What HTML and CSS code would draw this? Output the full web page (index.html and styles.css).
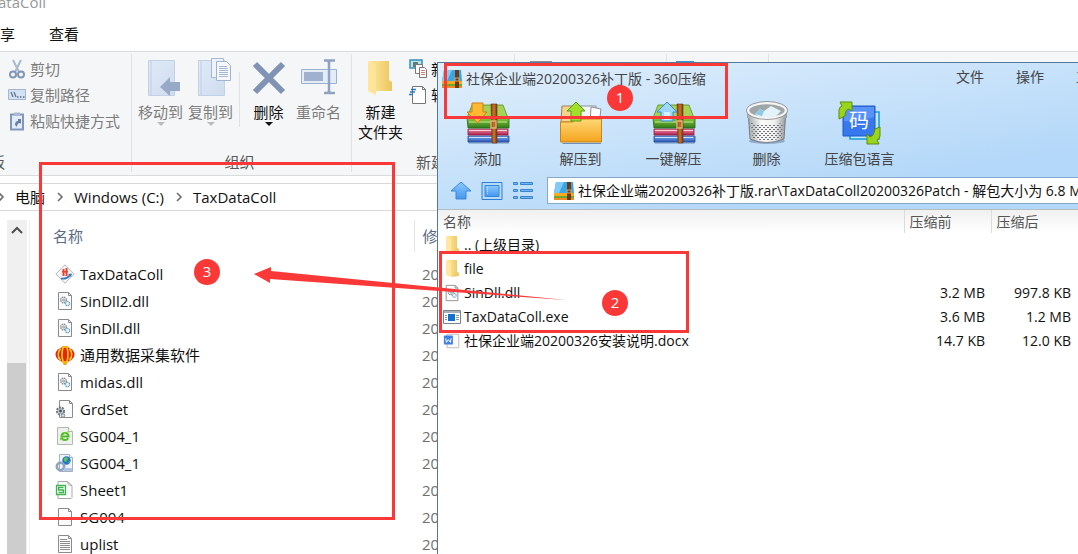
FILE: index.html
```
<!DOCTYPE html>
<html lang="zh-CN">
<head>
  <meta charset="UTF-8">
  <meta name="viewport" content="width=device-width, initial-scale=1.0">
  <title>TaxDataColl</title>
  <link rel="stylesheet" href="styles.css">
</head>
<body>
  <!-- shared icons -->
  <svg class="sprite" aria-hidden="true">
    <defs>
      <linearGradient id="folderFill" x1="0" x2="1" y1="0" y2="0">
        <stop offset="0" stop-color="#ffe9a2"/><stop offset="1" stop-color="#ecc65c"/>
      </linearGradient>
      <linearGradient id="paleBlue" x1="0" x2="1" y1="0" y2="1">
        <stop offset="0" stop-color="#e0eaf8"/><stop offset="1" stop-color="#cfdcef"/>
      </linearGradient>
      <linearGradient id="greenBook" x1="0" x2="0" y1="0" y2="1">
        <stop offset="0" stop-color="#8cc83c"/><stop offset="1" stop-color="#2f7a1c"/>
      </linearGradient>
      <linearGradient id="redBook" x1="0" x2="0" y1="0" y2="1">
        <stop offset="0" stop-color="#f08aa4"/><stop offset="1" stop-color="#b02050"/>
      </linearGradient>
      <linearGradient id="blueBook" x1="0" x2="0" y1="0" y2="1">
        <stop offset="0" stop-color="#7aaaf0"/><stop offset="1" stop-color="#2a58b8"/>
      </linearGradient>
      <linearGradient id="belt" x1="0" x2="1" y1="0" y2="0">
        <stop offset="0" stop-color="#8a4310"/><stop offset=".5" stop-color="#c9772e"/><stop offset="1" stop-color="#78380c"/>
      </linearGradient>
      <linearGradient id="orangeFolder" x1="0" x2="0" y1="0" y2="1">
        <stop offset="0" stop-color="#ffd877"/><stop offset="1" stop-color="#f5a31c"/>
      </linearGradient>
      <linearGradient id="skyBlue" x1="0" x2="0" y1="0" y2="1">
        <stop offset="0" stop-color="#8ccaff"/><stop offset="1" stop-color="#4496ee"/>
      </linearGradient>
      <linearGradient id="metal" x1="0" x2="1" y1="0" y2="0">
        <stop offset="0" stop-color="#a4a6a8"/><stop offset=".35" stop-color="#fafafa"/><stop offset=".7" stop-color="#f0f0f0"/><stop offset="1" stop-color="#96989b"/>
      </linearGradient>
      <pattern id="mesh" width="4" height="4" patternUnits="userSpaceOnUse">
        <rect y="0" width="2" height="1" fill="#6e7073"/><rect x="2" y="2" width="2" height="1" fill="#6e7073"/>
      </pattern>
    </defs>
    <symbol id="i-chevron" viewBox="0 0 8 10"><path d="M2 1l4 4-4 4" fill="none" stroke="#6d6d6d" stroke-width="1.6"/></symbol>
    <symbol id="i-folder" viewBox="0 0 18 20">
      <path d="M4 1h10v12l2 1v3H5z" fill="url(#folderFill)"/>
      <path d="M3 1l5 3v14l-5-2z" fill="#ffe9a0"/>
      <path d="M14 13l2 1v3l-8 1" fill="#f0cd6a"/>
    </symbol>
    <symbol id="i-page" viewBox="0 0 20 20">
      <path d="M3.500 1.500h10l3 3v14h-13z" fill="#fbfbfb" stroke="#8b8b8b"/>
      <path d="M13.500 1.500v3h3" fill="none" stroke="#8b8b8b"/>
    </symbol>
    <symbol id="i-dll" viewBox="0 0 20 20">
      <use href="#i-page"/>
      <circle cx="8.500" cy="9" r="2.800" fill="#f3f3f3" stroke="#7f878d" stroke-width="1.300" stroke-dasharray="1.500 .7"/>
      <circle cx="8.500" cy="9" r="1" fill="none" stroke="#7f878d" stroke-width=".8"/>
      <circle cx="12.500" cy="12.500" r="2.200" fill="#e4f2fa" stroke="#6fa3c4" stroke-width="1.200" stroke-dasharray="1.300 .5"/>
    </symbol>
    <symbol id="i-text" viewBox="0 0 20 20">
      <use href="#i-page"/>
      <path d="M5 5.500h7M5 7.500h10M5 9.500h10M5 11.500h10M5 13.500h10M5 15.500h10" stroke="#8d8d8d"/>
    </symbol>
    <symbol id="i-tax" viewBox="0 0 20 20">
      <path d="M10 .8L19.200 10 10 19.200.8 10z" fill="#f4f5f6" stroke="#b3b6ba"/>
      <path d="M7.500 5h2v7h-2zM10.500 4h2v8h-2zM7 7h6v1.500H7z" fill="#e8432e"/>
      <path d="M6 13.500q5 1 8-2.500l-1-1 4-.5-1 3.500-.8-.8q-3 4-9.200 3.300z" fill="#3e78bf"/>
    </symbol>
    <symbol id="i-lantern" viewBox="0 0 20 20">
      <ellipse cx="10" cy="9.500" rx="9.500" ry="7.500" fill="#e62414"/>
      <path d="M5.500 3.500q-4.500 6 0 12M14.500 3.500q4.500 6 0 12M8 2.500q-2 7 0 14M12 2.500q2 7 0 14" fill="none" stroke="#ffd21f" stroke-width="1.600"/>
      <path d="M7 1h6v2H7zM6 16h8l-2 2.500H8z" fill="#f7b410"/><path d="M10 18v2" stroke="#e8a80c" stroke-width="3"/>
    </symbol>
    <symbol id="i-gearpage" viewBox="0 0 20 20">
      <use href="#i-page" x="1"/>
      <circle cx="5.500" cy="12" r="3.600" fill="#c4cbd1" stroke="#6f7a83" stroke-width="2" stroke-dasharray="2 1"/>
      <circle cx="5.500" cy="12" r="1.400" fill="#4a535b"/>
      <circle cx="8" cy="16.500" r="1.800" fill="#d6dce0" stroke="#848e96"/>
    </symbol>
    <symbol id="i-epage" viewBox="0 0 20 20">
      <path d="M2.500 1.500h11l4 4v13h-15z" fill="#eef0ed" stroke="#b4b8b2"/><path d="M13.500 1.500v4h4" fill="#fff" stroke="#b4b8b2"/>
      <path d="M7 10.500h6.500q0-3.500-3.500-3.500t-3.500 3.500 3.500 3.500q2.300 0 3.200-1.700" fill="none" stroke="#51bd26" stroke-width="2"/>
      <path d="M5 14Q8 6 15 5.500" fill="none" stroke="#7ed043"/>
    </symbol>
    <symbol id="i-webpage" viewBox="0 0 20 20">
      <path d="M4.500 1.500h10l3 3v14h-13z" fill="#f0f3fa" stroke="#a7afc4"/><path d="M14.500 1.500v3h3" fill="#fff" stroke="#a7afc4"/>
      <circle cx="11.500" cy="7.500" r="4.200" fill="#2375cc"/><path d="M9 5l3-1 1 2-2 3-2-1zM13 9l2-1-1 3z" fill="#5ec34f"/>
      <circle cx="5.500" cy="13.500" r="3.700" fill="none" stroke="#8fa5bd" stroke-width="2.600"/>
      <path d="M9 15h8v3H9z" fill="#b1c5e2"/>
    </symbol>
    <symbol id="i-sheet" viewBox="0 0 20 20">
      <path d="M3 1.500h9.500l4.500 4v12l-1 1H3z" fill="#fff" stroke="#a9a9a9"/><path d="M12.500 1.500q0 4 4.500 4" fill="none" stroke="#a9a9a9"/>
      <path d="M1.500 5.500h9v9h-9z" fill="#fff" stroke="#3fb34f" stroke-width="1.300"/>
      <path d="M8.500 7.500h-5V10h5v2.500h-5" fill="none" stroke="#3fb34f" stroke-width="1.400"/>
    </symbol>
    <symbol id="i-exe" viewBox="0 0 18 14">
      <path d="M.5.5h17v13H.5z" fill="#fff" stroke="#7b838a"/><path d="M1 1h16v2H1z" fill="#a9b1b8"/>
      <path d="M5 4h7v7H5z" fill="#0f70cd"/><path d="M2 5.500h2M2 7.500h2M2 9.500h2M13 5.500h3M13 7.500h3M13 9.500h3" stroke="#8c959c"/>
    </symbol>
    <symbol id="i-doc" viewBox="0 0 20 20">
      <path d="M4.500 2.500h13v15h-13z" fill="#fafafa" stroke="#b5b5b5"/>
      <rect x="1" y="4" width="10" height="10" rx="1" fill="#3f7fe4"/>
      <path d="M3 7l.8 4.500L6 8.500l2.200 3L9 7" fill="none" stroke="#fff" stroke-width="1.100"/>
    </symbol>
    <symbol id="i-zip" viewBox="0 0 20 20">
      <path d="M2 1h17l1 11H0z" fill="#3ba6e6"/><path d="M2 1h8L5 12H0z" fill="#7fcbf5"/>
      <path d="M0 12h20v3H0z" fill="#f7ac20"/><path d="M0 15h20v2H0z" fill="#6aa832"/><path d="M0 17h20v2H0z" fill="#ee8c22"/>
      <path d="M13 1h4v18h-4z" fill="#713915"/><path d="M13 9h4v3h-4z" fill="none" stroke="#dca668"/>
    </symbol>
    <symbol id="i-books" viewBox="0 0 44 44">
      <path d="M2 41h41v2H3z" fill="#6e90ba" opacity=".5"/>
      <path d="M2 35h41v6H2z" fill="url(#blueBook)" stroke="#234a94" stroke-width=".8"/>
      <path d="M3 36.500h38" stroke="#cfe0fa"/>
      <path d="M2 28h40v6H2z" fill="url(#redBook)" stroke="#8a1c3c" stroke-width=".8"/>
      <path d="M3 29.500h38" stroke="#fbd0da"/>
      <path d="M6 4h31l5 13H1z" fill="#a6d255" stroke="#568f22" stroke-width=".8"/>
      <path d="M1 17h42v10H2z" fill="url(#greenBook)" stroke="#2a6a18" stroke-width=".8"/>
      <path d="M3 21h38" stroke="#c8ea92"/>
      <path d="M25 3h6v39h-5z" fill="url(#belt)" stroke="#69300b" stroke-width=".6"/>
      <path d="M25 20h5v7h-5z" fill="none" stroke="#e4b378" stroke-width="1.400"/>
    </symbol>
  </svg>

  <main class="desktop">
    <section class="explorer">
      <header class="explorer-title">ataColl</header>
      <nav class="tabs">
        <button>享</button>
        <button>查看</button>
      </nav>

      <div class="ribbon">
        <div class="group group-clip">
          <div class="small-tools">
            <button class="small off">
              <svg width="18" height="20" viewBox="0 0 18 20"><path d="M5 1l6 12M13 1L7 13" stroke="#a9b9cf" stroke-width="2"/><circle cx="5" cy="15.500" r="3" fill="none" stroke="#8397b5" stroke-width="2"/><circle cx="13" cy="15.500" r="3" fill="none" stroke="#8397b5" stroke-width="2"/></svg>剪切
            </button>
            <button class="small off">
              <svg width="18" height="20" viewBox="0 0 18 20"><path d="M.5 4.500h17v10H.5z" fill="#d4e1f3" stroke="#a3b5d1"/><path d="M3 7l2 5M6 7l2 5" stroke="#5c6f8d" stroke-width="1.200"/><path d="M9 12h1.500M12 12h1.500M15 12h1.500" stroke="#5c6f8d" stroke-width="1.500"/></svg>复制路径
            </button>
            <button class="small off">
              <svg width="18" height="20" viewBox="0 0 18 20"><path d="M3 3.500h12v15H3z" fill="#e3ecf8" stroke="#8298bb" stroke-width="2"/><path d="M6 1.500h6v3H6z" fill="#a9b9d2"/><path d="M7 14q0-4 3-4V8h3v5l-1-1q-3 0-3 4z" fill="#6680aa"/></svg>粘贴快捷方式
            </button>
          </div>
          <p class="group-name">板</p>
        </div>

        <div class="group group-organize">
          <div class="big-tools">
            <button class="big off">
              <svg width="36" height="42" viewBox="0 0 36 42"><path d="M5.500 4.500h26v35h-26z" fill="url(#paleBlue)" stroke="#c3d1e7"/><path d="M8 5v34" stroke="#bfcde4"/><path d="M17 31l10-10v5h10v9H27v5z" fill="#98a9c7"/></svg>
              移动到<i class="arrow"></i>
            </button>
            <button class="big off">
              <svg width="36" height="42" viewBox="0 0 36 42"><path d="M5.500 4.500h26v35h-26z" fill="url(#paleBlue)" stroke="#c3d1e7"/><path d="M8 5v34" stroke="#bfcde4"/><path d="M18.500 2.500h12v19h-12z" fill="#eef3fb" stroke="#a6b8d6"/><path d="M23.500 5.500h10l4 4v15h-14z" fill="#f4f7fc" stroke="#a0b2d0"/><path d="M26 10.500h8M26 12.500h9M26 14.500h9M26 16.500h9M26 18.500h9M26 20.500h9" stroke="#a6b8d6"/></svg>
              复制到<i class="arrow"></i>
            </button>
            <span class="split"></span>
            <button class="big">
              <svg width="36" height="42" viewBox="0 0 36 42"><path d="M4 8l28 28M32 8L4 36" stroke="#8093b4" stroke-width="6"/></svg>
              删除<i class="arrow"></i>
            </button>
            <button class="big off">
              <svg width="36" height="42" viewBox="0 0 36 42"><path d="M.5 13.500h35v14H.5z" fill="#e4ecf8" stroke="#9db0cd"/><path d="M3 16h19v9H3z" fill="#9fb1ce"/><path d="M28 6v30M23 4.500h4l1 2 1-2h5M23 37h4l1-2 1 2h5" fill="none" stroke="#8ea2c2" stroke-width="2.500"/></svg>
              重命名
            </button>
          </div>
          <p class="group-name">组织</p>
        </div>

        <div class="group group-new">
          <div class="big-tools">
            <button class="big">
              <svg width="36" height="42" viewBox="0 0 36 42"><path d="M6 5h20v19l3 2v9H8z" fill="url(#folderFill)"/><path d="M5 5l8 5v29l-8-4z" fill="#ffe49a"/></svg>
              新建<br>文件夹
            </button>
            <div class="small-tools">
              <button class="small">
                <svg width="20" height="20" viewBox="0 0 20 20"><path d="M2 1h12v8H2z" fill="#b9e3ee" stroke="#3a8fb4" stroke-width="1.500"/><path d="M5 3h5v5H5z" fill="#5c7f71"/><path d="M7.500 5.500h7v9h-7z" fill="#fff" stroke="#777"/><path d="M11.500 8.500h5l2 2v8h-7z" fill="#fff" stroke="#777"/><path d="M13 11.500h4M13 13.500h4M13 15.500h4" stroke="#d87f74"/></svg>新
              </button>
              <button class="small">
                <svg width="20" height="20" viewBox="0 0 20 20"><path d="M4.500 1.500h10l3 3v14h-13z" fill="#fff" stroke="#777"/><path d="M14.500 1.500v3h3" fill="none" stroke="#777"/><path d="M3 4.500h5M2 7h5M1 9.500h4" stroke="#2678c0" stroke-width="1.500"/></svg>轻
              </button>
            </div>
          </div>
          <p class="group-name">新建</p>
        </div>
        <div class="group group-open"><span class="peek"></span></div>
        <div class="group group-select"><span class="peek"></span></div>
      </div>

      <nav class="address">
        <svg width="8" height="10"><use href="#i-chevron"/></svg>
        <a href="#">电脑</a>
        <svg width="8" height="10"><use href="#i-chevron"/></svg>
        <a href="#">Windows (C:)</a>
        <svg width="8" height="10"><use href="#i-chevron"/></svg>
        <a href="#">TaxDataColl</a>
      </nav>

      <div class="explorer-body">
        <div class="scrollbar">
          <svg width="20" height="20" viewBox="0 0 20 20"><path d="M5 13l5-5 5 5" fill="none" stroke="#505050" stroke-width="2"/></svg>
          <div class="thumb"></div>
        </div>
        <table class="files">
          <thead>
            <tr><th>名称</th><th class="date">修</th></tr>
          </thead>
          <tbody>
            <tr><td><svg><use href="#i-tax"/></svg>TaxDataColl</td><td class="date">20</td></tr>
            <tr><td><svg><use href="#i-dll"/></svg>SinDll2.dll</td><td class="date">20</td></tr>
            <tr><td><svg><use href="#i-dll"/></svg>SinDll.dll</td><td class="date">20</td></tr>
            <tr><td><svg><use href="#i-lantern"/></svg>通用数据采集软件</td><td class="date">20</td></tr>
            <tr><td><svg><use href="#i-dll"/></svg>midas.dll</td><td class="date">20</td></tr>
            <tr><td><svg><use href="#i-gearpage"/></svg>GrdSet</td><td class="date">20</td></tr>
            <tr><td><svg><use href="#i-epage"/></svg>SG004_1</td><td class="date">20</td></tr>
            <tr><td><svg><use href="#i-webpage"/></svg>SG004_1</td><td class="date">20</td></tr>
            <tr><td><svg><use href="#i-sheet"/></svg>Sheet1</td><td class="date">20</td></tr>
            <tr><td><svg><use href="#i-page"/></svg>SG004</td><td class="date">20</td></tr>
            <tr><td><svg><use href="#i-text"/></svg>uplist</td><td class="date">20</td></tr>
          </tbody>
        </table>
      </div>
    </section>

    <section class="archive">
      <div class="archive-head">
        <header class="archive-title">
          <svg width="20" height="20"><use href="#i-zip"/></svg>
          <h1>社保企业端20200326补丁版 - 360压缩</h1>
          <nav class="menu">
            <button>文件</button>
            <button>操作</button>
            <button>工</button>
          </nav>
        </header>

        <div class="toolbar">
          <button>
            <svg viewBox="0 0 44 44"><use href="#i-books"/><path d="M6 2h11v9h4l-9.500 11L1 11h5z" fill="#fdb934" stroke="#d87a12"/></svg>
            添加
          </button>
          <button>
            <svg viewBox="0 0 44 44"><path d="M3 5h14l3 4v12H2z" fill="#f3d58e" stroke="#9b8355"/><path d="M20 5h17v18H20z" fill="#f5f6f7" stroke="#8c8f94"/><path d="M32 6l10 2-2 15h-9z" fill="#fff" stroke="#8c8f94"/><path d="M1.500 21h12l4-3h25v23h-41z" fill="url(#orangeFolder)" stroke="#c98512"/><path d="M3 42h39v1H4z" fill="#6e90ba"/><path d="M17 1l9 9h-4v10H12V10H8z" fill="#a2df2b" stroke="#569a12"/></svg>
            解压到
          </button>
          <button>
            <svg viewBox="0 0 44 44"><use href="#i-books"/><path d="M15 1l10 10h-4v9H9v-9H5z" fill="#9dd7fb" stroke="#348bd4"/><path d="M12 11h6v8h-6z" fill="#d5f0ff"/></svg>
            一键解压
          </button>
          <button>
            <svg viewBox="0 0 44 44"><ellipse cx="22" cy="40" rx="18" ry="3" fill="#7088a6" opacity=".6"/><path d="M3 9l2 29q16 7 34 0l2-29z" fill="url(#metal)" stroke="#66696c" stroke-width=".8"/><path d="M6 22q16 4 32 0l-1 15q-15 5-30 0z" fill="url(#mesh)"/><path d="M2 9v8q19 8 40 0V9z" fill="url(#metal)"/><ellipse cx="22" cy="9.500" rx="19" ry="7.500" fill="#a0a5a8" stroke="#f5f5f5" stroke-width="2.500"/><ellipse cx="22" cy="9.500" rx="20.500" ry="9" fill="none" stroke="#808285" stroke-width=".8"/><path d="M10 13l5-5 4 2 7-5 10 5-5 5q-9 3-18 0z" fill="#e4f2f9"/><path d="M10 13l5-5 4 2-2 5z" fill="#8cc9e4"/></svg>
            删除
          </button>
          <button>
            <svg viewBox="0 0 44 44"><path d="M12 11h29v27H12z" fill="#bfeafb" stroke="#159bdc" stroke-width="1.500"/><path d="M5 5h32v30H5z" fill="#3878ee" stroke="#1c58c0"/><path d="M6 6h30v10q-15 5-30 4z" fill="#5a93f7"/><text x="21" y="27" text-anchor="middle" class="glyph">码</text><path d="M1 18V9q1-4 3-4L2 1h12v9l-3-2q-4 1-4 7z" fill="#9bd41d" stroke="#5a8d0c"/><path d="M42 26v9q-1 4-3 4l2 4H29V33l3 3q4-1 5-8z" fill="#9bd41d" stroke="#5a8d0c"/></svg>
            压缩包语言
          </button>
        </div>

        <div class="pathbar">
          <button aria-label="向上"><svg width="22" height="20" viewBox="0 0 22 20"><path d="M11 1l10 9h-5v8H6v-8H1z" fill="url(#skyBlue)" stroke="#3a86dc"/></svg></button>
          <button aria-label="预览"><svg width="22" height="20" viewBox="0 0 22 20"><path d="M1 1.500h20v17H1z" fill="#b4dafc" stroke="#2f7cd2"/><path d="M4 4.500h14v11H4z" fill="url(#skyBlue)" stroke="#3a86dc"/><path d="M6.500 6v8" stroke="#d7edff" stroke-dasharray="1 1"/></svg></button>
          <button aria-label="列表"><svg width="22" height="20" viewBox="0 0 22 20"><path d="M1.500 1.500h4v2h-4zM8.500 1.500h12v2h-12zM1.500 8.500h4v2h-4zM8.500 8.500h12v2h-12zM1.500 15.500h4v2h-4zM8.500 15.500h12v2h-12z" fill="#6fb4f4" stroke="#3a83cf"/></svg></button>
          <label class="path">
            <svg width="20" height="20"><use href="#i-zip"/></svg>
            <input type="text" aria-label="路径" value="社保企业端20200326补丁版.rar\TaxDataColl20200326Patch - 解包大小为 6.8 M">
          </label>
        </div>
      </div>

      <table class="entries">
        <thead>
          <tr><th>名称</th><th class="before">压缩前</th><th class="after">压缩后</th></tr>
        </thead>
        <tbody>
          <tr><td><svg><use href="#i-folder"/></svg>.. (上级目录)</td><td class="before"></td><td class="after"></td></tr>
          <tr><td><svg><use href="#i-folder"/></svg>file</td><td class="before"></td><td class="after"></td></tr>
          <tr><td><svg><use href="#i-dll"/></svg>SinDll.dll</td><td class="before">3.2 MB</td><td class="after">997.8 KB</td></tr>
          <tr><td><svg><use href="#i-exe"/></svg>TaxDataColl.exe</td><td class="before">3.6 MB</td><td class="after">1.2 MB</td></tr>
          <tr><td><svg><use href="#i-doc"/></svg>社保企业端20200326安装说明.docx</td><td class="before">14.7 KB</td><td class="after">12.0 KB</td></tr>
        </tbody>
      </table>
    </section>

    <!-- step markers drawn over both windows -->
    <div class="mark mark-title"></div>
    <div class="mark mark-entries"></div>
    <div class="mark mark-target"></div>
    <svg class="drag-arrow" width="314" height="36" viewBox="0 0 314 36"><path d="M0 9L17 2v4l295 29L16 14l0 4z" fill="#fb3838"/></svg>
    <span class="step step-1">1</span>
    <span class="step step-2">2</span>
    <span class="step step-3">3</span>
  </main>
</body>
</html>
```
FILE: styles.css
```
* {
  box-sizing: border-box;
}

body {
  margin: 0;
  font-family: "Open Sans", "Noto Sans CJK SC", sans-serif;
  font-size: 15px;
  line-height: 20px;
  color: #111;
  background: #fff;
}

button {
  padding: 0;
  border: none;
  background: none;
  font: inherit;
  color: inherit;
  white-space: nowrap;
}

a {
  color: inherit;
  text-decoration: none;
}

p {
  margin: 0;
}

svg {
  flex: none;
}

table {
  border-collapse: collapse;
  table-layout: fixed;
}

th {
  font-weight: 400;
  text-align: left;
}

td,
th {
  padding: 0;
  white-space: nowrap;
}

.sprite {
  position: absolute;
  width: 0;
  height: 0;
}

.desktop {
  position: relative;
  height: 100vh;
  overflow: hidden;
}

/* explorer window */
.explorer {
  display: flex;
  flex-direction: column;
  height: 100%;
}

.explorer-title {
  flex: none;
  margin: -8px 0 0 -2px;
  color: #999;
}

.tabs {
  display: flex;
  flex: none;
  gap: 34px;
  height: 39px;
  padding-top: 4px;
}

.ribbon {
  display: flex;
  flex: none;
  height: 125px;
  padding: 2px 0 3px;
  background: #f5f6f7;
  border-top: 1px solid #dadbdc;
  border-bottom: 1px solid #dadbdc;
}

.group {
  display: flex;
  flex-direction: column;
  flex: none;
  justify-content: space-between;
  border-right: 1px solid #dfe1e4;
}

.group-clip {
  width: 132px;
  padding-left: 8px;
}

.group-organize {
  width: 220px;
}

.group-new {
  width: 163px;
}

.group-open {
  width: 152px;
}

.group-select {
  width: 102px;
}

.group-name {
  padding-right: 4px;
  color: #5a5a5a;
  text-align: center;
}

.group-clip .group-name {
  margin-left: -18px;
  text-align: left;
}

.small-tools {
  display: flex;
  flex-direction: column;
  gap: 6px;
  padding-top: 5px;
}

.small {
  display: flex;
  align-items: center;
  gap: 4px;
}

.off {
  color: #7d7d7d;
}

.big-tools {
  display: flex;
  gap: 5px;
  padding: 2px 0 0 6px;
}

.big {
  display: flex;
  flex-direction: column;
  align-items: center;
  min-width: 45px;
}

.big svg {
  margin-bottom: 4px;
  overflow: visible;
}

.arrow {
  border: 4px solid transparent;
  border-top-color: currentColor;
  border-bottom: none;
}

.off .arrow {
  border-top-color: #bbb;
}

.split {
  width: 1px;
  height: 55px;
  margin: 16px 1px 0;
  background: #dfe1e4;
}

.group-new .small-tools {
  padding-top: 3px;
}

.group-new .small {
  gap: 3px;
}

.peek {
  width: 22px;
  margin: 7px 0 0 15px;
  border-top: 2px solid #8b9298;
}

.group-select .peek {
  width: 18px;
  margin-left: 9px;
  border-color: #3b93d4;
}

.address {
  display: flex;
  flex: none;
  align-items: center;
  gap: 10px;
  height: 28px;
  margin: 7px 0 0 -4px;
  border: 1px solid #d9d9d9;
}

.address a {
  margin-right: 1px;
}

.explorer-body {
  display: flex;
  flex: 1;
  align-items: stretch;
  min-height: 0;
  padding: 9px 0 0 7px;
}

.scrollbar {
  display: flex;
  flex: none;
  flex-direction: column;
  width: 20px;
  background: #f0f0f0;
}

.thumb {
  flex: 1;
  width: 19px;
  margin-top: 123px;
  background: #cdcdcd;
}

.files {
  flex: none;
  align-self: flex-start;
  width: 439px;
  margin-left: 2px;
  border-left: 1px solid #f0f0f0;
}

.files th {
  height: 32px;
  padding-left: 23px;
  color: #5b6b84;
}

.files .date {
  width: 54px;
  padding-left: 8px;
  color: #707070;
}

.files th.date {
  border-left: 1px solid #e2e2e2;
  color: #5b6b84;
}

.files tbody::before {
  display: block;
  height: 8px;
  content: "";
}

.files td {
  height: 27px;
  padding-left: 25px;
}

.files svg {
  width: 20px;
  height: 20px;
  margin-right: 5px;
  vertical-align: top;
}

/* archive window, runs off the right edge of the screen */
.archive {
  position: absolute;
  top: 62px;
  right: -26px;
  bottom: 0;
  left: 437px;
  font-size: 14px;
  background: #fff;
  border-top: 1px solid #55779b;
  border-left: 1px solid #55779b;
}

.archive-head {
  height: 147px;
  background: linear-gradient(170deg, #e1effc, #b4d8f9 75%);
  border-bottom: 1px solid #b4bcc4;
}

.archive-title {
  display: flex;
  gap: 4px;
  height: 38px;
  padding: 6px 0 0 4px;
  color: #444;
}

.archive-title h1 {
  margin: 0;
  font-size: 14px;
  font-weight: 400;
}

.menu {
  display: flex;
  gap: 32px;
  height: 16px;
  margin-left: auto;
  padding-right: 14px;
  line-height: 16px;
}

.toolbar {
  display: flex;
  padding-left: 3px;
  color: #444;
}

.toolbar button {
  display: flex;
  flex-direction: column;
  gap: 4px;
  align-items: center;
  width: 93px;
}

.toolbar svg {
  width: 44px;
  height: 44px;
}

.glyph {
  font-size: 20px;
  fill: #fff;
}

.pathbar {
  display: flex;
  gap: 9px;
  align-items: center;
  margin-top: 8px;
  padding-left: 12px;
}

.pathbar button,
.pathbar svg {
  display: block;
}

.path {
  display: flex;
  flex: 1;
  gap: 4px;
  align-items: center;
  height: 27px;
  margin-left: 4px;
  padding-left: 6px;
  background: #fff;
  border: 1px solid #86a9cc;
}

.path input {
  flex: 1;
  min-width: 0;
  padding: 0;
  border: none;
  outline: none;
  font: inherit;
  color: #111;
}

.entries {
  width: 100%;
}

.entries th {
  height: 23px;
  padding-left: 5px;
  color: #555;
  background: linear-gradient(#f0f0f0, #fff);
}

.entries td {
  height: 24px;
  padding-left: 5px;
}

.entries .before {
  width: 87px;
}

.entries .after {
  width: 113px;
}

.entries th.before,
.entries th.after {
  border-left: 1px solid #dcdcdc;
}

.entries td.before {
  padding-right: 6px;
  text-align: right;
}

.entries td.after {
  padding-right: 33px;
  text-align: right;
}

.entries svg {
  width: 18px;
  height: 20px;
  margin-right: 3px;
  vertical-align: top;
}

/* red markers */
.mark {
  position: absolute;
  border: 3px solid #fb3838;
}

.mark-title {
  top: 63px;
  left: 444px;
  width: 284px;
  height: 56px;
}

.mark-entries {
  top: 251px;
  left: 439px;
  width: 250px;
  height: 82px;
}

.mark-target {
  top: 162px;
  left: 39px;
  width: 356px;
  height: 358px;
}

.drag-arrow {
  position: absolute;
  top: 265px;
  left: 254px;
}

.step {
  position: absolute;
  width: 26px;
  height: 26px;
  border-radius: 50%;
  line-height: 24px;
  text-align: center;
  color: #fff;
  background: #fb3838;
}

.step-1 {
  top: 85px;
  left: 607px;
}

.step-2 {
  top: 290px;
  left: 602px;
}

.step-3 {
  top: 259px;
  left: 194px;
}
```
